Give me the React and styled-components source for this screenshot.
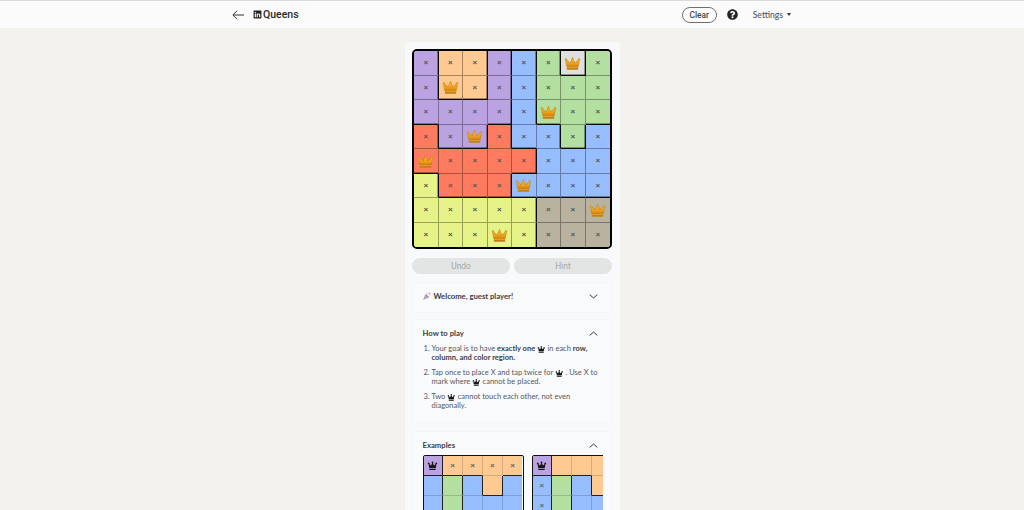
import styled, { createGlobalStyle } from "styled-components";
import { FaLinkedin, FaQuestionCircle } from "react-icons/fa";

const GlobalStyle = createGlobalStyle`
  html, body {
    margin: 0;
    height: 510px;
    overflow: hidden;
    background: #f4f2ee;
    font-family: Lato, Roboto, "Noto Sans", "Liberation Sans", sans-serif;
  }
`;

const COLORS = {
  P: "#bba3e2",
  O: "#ffc992",
  B: "#96beff",
  G: "#b3dfa0",
  R: "#ff7b60",
  Y: "#e6f388",
  T: "#b9b29e",
};

const BOARD = ["POOPBGGG", "POOPBGGG", "PPPPBGGG", "RPPRBBGB", "RRRRRBBB", "YRRRBBBB", "YYYYYTTT", "YYYYYTTT"];
const QUEENS = { "0-6": true, "1-1": true, "2-5": true, "3-2": true, "4-0": true, "5-4": true, "6-7": true, "7-3": true };

const MINI_ONE = ["POOOO", "BGBOB", "BGBBB"];
const MINI_TWO = ["POOOO", "BGBOB", "BGBBB"];

const Page = styled.div`
  display: flex;
  flex-direction: column;
  height: 510px;
  overflow: hidden;
`;

const Nav = styled.header`
  flex: none;
  height: 27px;
  background: #fbfbfb;
  border-top: 1px solid #dcdcdc;
  display: flex;
  justify-content: center;
`;

const NavInner = styled.div`
  width: 560px;
  display: flex;
  align-items: center;
  color: #1f1f1f;
`;

const Brand = styled.div`
  display: flex;
  align-items: center;
  margin-left: 9px;
  font: 500 10.5px Roboto, sans-serif;
  color: #2a2a2a;
`;

const NavRight = styled.div`
  margin-left: auto;
  margin-right: 1px;
  display: flex;
  align-items: center;
`;

const ClearButton = styled.button`
  width: 35px;
  height: 16px;
  padding: 0;
  border: 1px solid #6f6f6f;
  border-radius: 8px;
  background: #fff;
  color: #444;
  font: 500 8.4px Roboto, sans-serif;
`;

const SettingsLabel = styled.span`
  display: flex;
  align-items: center;
  margin-left: 15px;
  font-size: 8.6px;
  font-weight: 500;
  color: #555;
`;

const Caret = styled.i`
  margin-left: 4px;
  border-left: 2.5px solid transparent;
  border-right: 2.5px solid transparent;
  border-top: 3px solid #333;
`;

const Main = styled.main`
  align-self: center;
  width: 200px;
  margin-top: 14px;
  padding: 7px 7.5px;
  background: #f8f9fb;
  border-radius: 4px 4px 0 0;
  display: flex;
  flex-direction: column;
  flex: none;
`;

const Board = styled.div`
  width: 200px;
  height: 200px;
  box-sizing: border-box;
  border: 2px solid #000;
  border-radius: 5px;
  overflow: hidden;
  display: grid;
  grid-template-columns: repeat(8, 1fr);
  grid-template-rows: repeat(8, 1fr);
`;

const regionShadow = (p) => {
  const parts = [];
  if (p.$right) parts.push("inset -1px 0 0 rgba(0, 0, 0, 0.35)");
  if (p.$bottom) parts.push("inset 0 -1px 0 rgba(0, 0, 0, 0.35)");
  return parts.length ? parts.join(", ") : "none";
};

const Cell = styled.div`
  box-sizing: border-box;
  min-width: 0;
  display: flex;
  align-items: center;
  justify-content: center;
  background: ${(p) => p.$bg};
  border-right: 1px solid ${(p) => (p.$right ? "#0a0a0a" : "rgba(0, 0, 0, 0.34)")};
  border-bottom: 1px solid ${(p) => (p.$bottom ? "#0a0a0a" : "rgba(0, 0, 0, 0.34)")};
  box-shadow: ${regionShadow};
  font: bold 8px "Liberation Sans", sans-serif;
  color: #555;
  &:nth-child(8n) {
    border-right: none;
  }
  &:nth-last-child(-n + 8) {
    border-bottom: none;
  }
`;

const Actions = styled.div`
  display: grid;
  grid-template-columns: 1fr 1fr;
  gap: 4px;
  margin-top: 9px;
`;

const ActionButton = styled.button`
  height: 16px;
  padding: 0;
  border: none;
  border-radius: 8px;
  background: #e3e5e4;
  color: #a5a7a6;
  font: 8.4px Roboto, sans-serif;
`;

const Card = styled.section`
  box-sizing: border-box;
  margin-top: ${(p) => p.$top}px;
  padding: ${(p) => p.$pad}px 9px 0 9.5px;
  height: ${(p) => p.$h}px;
  background: #f9fafb;
  border: 1px solid #f4f5f6;
  border-radius: 4px;
  overflow: hidden;
  flex: none;
`;

const CardHead = styled.div`
  display: flex;
  align-items: center;
  justify-content: space-between;
  height: 10px;
  padding-right: 4px;
  font-size: 7.7px;
  font-weight: 700;
  color: #3c4043;
`;

const CardTitle = styled.span`
  display: flex;
  align-items: center;
  gap: 3px;
  font-weight: 700;
`;

const Steps = styled.ol`
  margin: 6px 0 0;
  padding: 0 0 0 9px;
  font-size: 7.5px;
  line-height: 9px;
  color: #55585b;
`;

const Step = styled.li`
  margin-bottom: 6px;
`;

const Strong = styled.b`
  font-weight: 700;
  color: #3c4043;
`;

const Examples = styled.div`
  display: flex;
  gap: 8px;
  margin-top: 5px;
  width: 180px;
  overflow: hidden;
`;

const MiniBoard = styled.div`
  flex: none;
  width: 101px;
  box-sizing: border-box;
  border: 1px solid #111;
  border-radius: 2px 2px 0 0;
  display: grid;
  grid-template-columns: repeat(5, 1fr);
  grid-auto-rows: 20px;
`;

const MiniCell = styled.div`
  box-sizing: border-box;
  min-width: 0;
  display: flex;
  align-items: center;
  justify-content: center;
  background: ${(p) => p.$bg};
  border-right: 1px solid ${(p) => (p.$right ? "#222" : "rgba(0, 0, 0, 0.16)")};
  border-bottom: 1px solid ${(p) => (p.$bottom ? "#222" : "rgba(0, 0, 0, 0.16)")};
  font: bold 8px "Liberation Sans", sans-serif;
  color: #666;
  &:nth-child(5n) {
    border-right: none;
  }
`;

const InlineCrown = styled.svg`
  display: inline-block;
  width: ${(p) => p.$size || 8.5}px;
  height: ${(p) => p.$size || 8.5}px;
  margin: -2px 0;
  vertical-align: -0.5px;
`;

const BlackCrown = ({ size }) => (
  <InlineCrown $size={size} viewBox="0 0 20 20">
    <path
      fill="#161616"
      d="M10 2.5a1.7 1.7 0 0 1 .8 3.2l1.7 4.3 3-2.4a1.7 1.7 0 1 1 1.4.6L15.8 15H4.2L3.1 8.2a1.7 1.7 0 1 1 1.4-.6l3 2.4 1.7-4.3A1.7 1.7 0 0 1 10 2.5zM4.2 16.2h11.6V18H4.2z"
    />
  </InlineCrown>
);

const GoldCrown = () => (
  <svg width="17" height="14.5" viewBox="0 0 24 20">
    <defs>
      <linearGradient id="gold" x1="0" y1="0" x2="0" y2="1">
        <stop offset="0" stopColor="#f9c23c" />
        <stop offset="0.7" stopColor="#ee9c12" />
        <stop offset="1" stopColor="#c9800f" />
      </linearGradient>
    </defs>
    <path
      fill="url(#gold)"
      stroke="#b8770e"
      strokeWidth="0.7"
      d="M12 1.5l3.2 8 5-4.2a1.3 1.3 0 1 1 1.6.5L20 15H4L2.2 5.8a1.3 1.3 0 1 1 1.6-.5l5 4.2z"
    />
    <path fill="#c47f12" d="M4 15.5h16V19H4z" />
    <path fill="#eda52b" d="M4.5 15.5h15v1.3h-15z" />
  </svg>
);

const BackArrow = () => (
  <svg width="12" height="10" viewBox="0 0 12 10" fill="none" stroke="#333" strokeWidth="1">
    <path d="M12 5H1M5 .8L.9 5 5 9.2" />
  </svg>
);

const Chevron = ({ up }) => (
  <svg width="9" height="5" viewBox="0 0 9 5" fill="none" stroke="#333" strokeWidth="1">
    <path d={up ? "M.7 4.4L4.5 1l3.8 3.4" : "M.7.6L4.5 4l3.8-3.4"} />
  </svg>
);

const Party = () => (
  <svg width="8" height="8" viewBox="0 0 8 8">
    <path fill="#b9a6a0" d="M0 8l2-5 3 3z" />
    <path fill="#8b7fd6" d="M2 3l3 3 1-1-3-3z" />
    <circle cx="6.5" cy="1.5" r="0.9" fill="#e88fa8" />
    <circle cx="4.2" cy="1" r="0.6" fill="#8fb4e8" />
    <circle cx="7" cy="3.8" r="0.6" fill="#e8c36f" />
  </svg>
);

// a region edge gets the dark line, cells of one region the faint one
const edges = (rows, r, c) => ({
  $right: rows[r][c + 1] !== undefined && rows[r][c + 1] !== rows[r][c],
  $bottom: rows[r + 1] !== undefined && rows[r + 1][c] !== rows[r][c],
});

const App = () => {
  return (
    <Page>
      <GlobalStyle />
      <Nav>
        <NavInner>
          <BackArrow />
          <Brand>
            <FaLinkedin size={9} color="#222" style={{ marginRight: 1 }} />
            Queens
          </Brand>
          <NavRight>
            <ClearButton>Clear</ClearButton>
            <FaQuestionCircle size={11} color="#262626" style={{ marginLeft: 10 }} />
            <SettingsLabel>
              Settings
              <Caret />
            </SettingsLabel>
          </NavRight>
        </NavInner>
      </Nav>
      <Main>
        <Board>
          {BOARD.flatMap((row, r) =>
            row.split("").map((key, c) => (
              <Cell
                key={`${r}-${c}`}
                $bg={r === 0 && c === 6 ? "#dfdfdf" : COLORS[key]}
                {...edges(BOARD, r, c)}
                $right={edges(BOARD, r, c).$right || (r === 0 && (c === 5 || c === 6))}
                $bottom={edges(BOARD, r, c).$bottom || (r === 0 && c === 6)}
              >
                {QUEENS[`${r}-${c}`] ? <GoldCrown /> : "×"}
              </Cell>
            ))
          )}
        </Board>
        <Actions>
          <ActionButton>Undo</ActionButton>
          <ActionButton>Hint</ActionButton>
        </Actions>
        <Card $top={8} $h={31} $pad={8}>
          <CardHead>
            <CardTitle>
              <Party />
              Welcome, guest player!
            </CardTitle>
            <Chevron />
          </CardHead>
        </Card>
        <Card $top={6} $h={104} $pad={8}>
          <CardHead>
            How to play
            <Chevron up />
          </CardHead>
          <Steps>
            <Step>
              Your goal is to have <Strong>exactly one</Strong> <BlackCrown /> in each{" "}
              <Strong>row, column, and color region.</Strong>
            </Step>
            <Step>
              Tap once to place X and tap twice for <BlackCrown /> . Use X to mark where <BlackCrown /> cannot be
              placed.
            </Step>
            <Step>
              Two <BlackCrown /> cannot touch each other, not even diagonally.
            </Step>
          </Steps>
        </Card>
        <Card $top={8} $h={90} $pad={8}>
          <CardHead>
            Examples
            <Chevron up />
          </CardHead>
          <Examples>
            <MiniBoard>
              {MINI_ONE.flatMap((row, r) =>
                row.split("").map((key, c) => (
                  <MiniCell key={`${r}-${c}`} $bg={COLORS[key]} {...edges(MINI_ONE, r, c)}>
                    {r === 0 ? c === 0 ? <BlackCrown size={11} /> : "×" : null}
                  </MiniCell>
                ))
              )}
            </MiniBoard>
            <MiniBoard>
              {MINI_TWO.flatMap((row, r) =>
                row.split("").map((key, c) => (
                  <MiniCell key={`${r}-${c}`} $bg={COLORS[key]} {...edges(MINI_TWO, r, c)}>
                    {r === 0 && c === 0 ? <BlackCrown size={11} /> : c === 0 ? "×" : null}
                  </MiniCell>
                ))
              )}
            </MiniBoard>
          </Examples>
        </Card>
      </Main>
    </Page>
  );
};

export default App;
